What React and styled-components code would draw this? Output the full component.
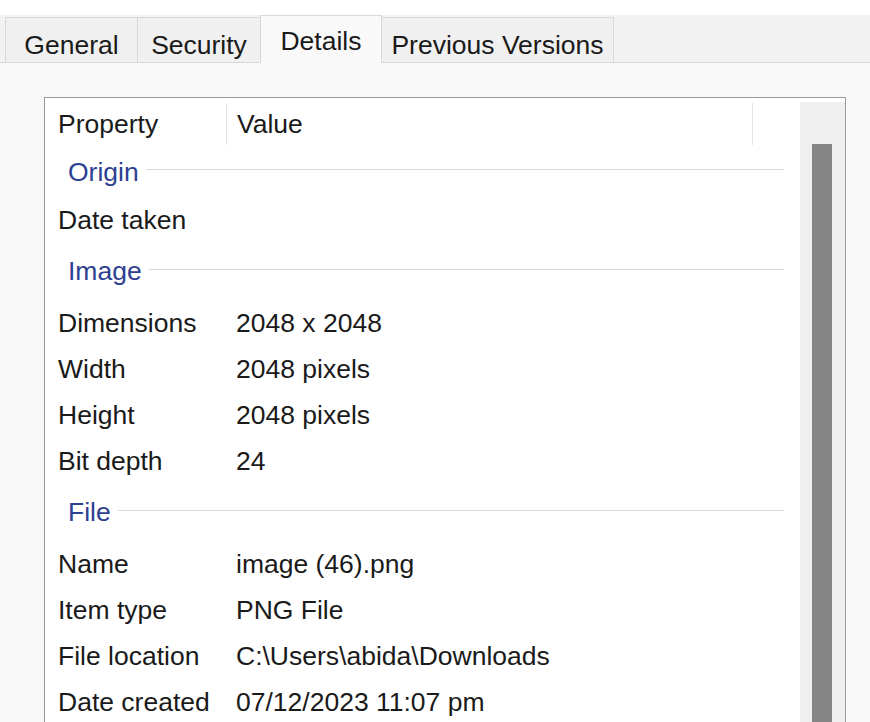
import React from 'react'
import styled, { createGlobalStyle } from 'styled-components'

const GlobalStyle = createGlobalStyle`
  html, body {
    margin: 0;
    padding: 0;
    overflow: hidden;
    background: #ffffff;
  }
  body {
    font-family: "Liberation Sans", Arial, sans-serif;
    color: #1a1a1a;
  }
`

const Window = styled.div`
  height: 722px;
  display: flex;
  flex-direction: column;
  overflow: hidden;
`

const TabStrip = styled.div`
  display: flex;
  align-items: flex-end;
  padding: 15px 0 0 5px;
  background: linear-gradient(#ffffff 15px, #f2f2f2 15px);
  border-bottom: 1px solid #d9d9d9;
  height: 47px;
`

const Tab = styled.div`
  position: relative;
  box-sizing: border-box;
  width: ${p => p.$width}px;
  height: ${p => (p.$active ? 48 : 45)}px;
  margin-left: -1px;
  margin-bottom: ${p => (p.$active ? '-1px' : '0')};
  padding-top: ${p => (p.$active ? '3px' : '10px')};
  display: flex;
  align-items: center;
  justify-content: center;
  font-size: 26.5px;
  color: #1a1a1a;
  background: ${p => (p.$active ? '#f9f9f9' : '#f0f0f0')};
  border: 1px solid #d9d9d9;
  border-bottom: none;
  z-index: ${p => (p.$active ? 1 : 0)};

  &:first-child {
    margin-left: 0;
  }
`

const Panel = styled.div`
  flex: 1;
  min-height: 0;
  background: #f8f8f8;
  padding: 34px 24px 0 44px;
  display: flex;
`

const ListBox = styled.div`
  flex: 1;
  display: flex;
  height: 700px;
  background: #ffffff;
  border: 1px solid #9a9a9a;
  border-bottom: none;
`

const ListContent = styled.div`
  flex: 1;
  display: flex;
  flex-direction: column;
`

const HeaderRow = styled.div`
  display: grid;
  grid-template-columns: 182px 526px 1fr;
  height: 49px;
`

const HeaderCell = styled.div`
  align-self: start;
  margin-top: 5px;
  height: 42px;
  display: flex;
  align-items: center;
  padding-left: ${p => p.$pad}px;
  font-size: 26.5px;
  color: #1a1a1a;
  border-right: ${p => (p.$divider ? '1px solid #e3e3e3' : 'none')};
`

const GroupHeader = styled.div`
  display: flex;
  align-items: center;
  height: ${p => (p.$first ? 50 : 57)}px;
  padding: 0 16px 0 23px;
  font-size: 26.5px;
  color: #2e4091;
`

const GroupLine = styled.div`
  flex: 1;
  height: 1px;
  margin: 0 0 5px 7px;
  background: #d3d9e3;
`

const Row = styled.div`
  display: grid;
  grid-template-columns: 178px 1fr;
  align-items: center;
  height: 46px;
  font-size: 26.5px;
  color: #1a1a1a;
`

const Cell = styled.div`
  padding-left: 13px;
  white-space: nowrap;
`

const ScrollTrack = styled.div`
  width: 45px;
  margin-top: 4px;
  padding: 42px 0 0 12px;
  box-sizing: border-box;
  background: #efefef;
`

const ScrollThumb = styled.div`
  width: 20px;
  height: 800px;
  background: #858585;
`

const tabs = [
  { label: 'General', width: 133 },
  { label: 'Security', width: 124 },
  { label: 'Details', width: 122, active: true },
  { label: 'Previous Versions', width: 233 },
]

const groups = [
  {
    title: 'Origin',
    rows: [['Date taken', '']],
  },
  {
    title: 'Image',
    rows: [
      ['Dimensions', '2048 x 2048'],
      ['Width', '2048 pixels'],
      ['Height', '2048 pixels'],
      ['Bit depth', '24'],
    ],
  },
  {
    title: 'File',
    rows: [
      ['Name', 'image (46).png'],
      ['Item type', 'PNG File'],
      ['File location', 'C:\\Users\\abida\\Downloads'],
      ['Date created', '07/12/2023 11:07 pm'],
    ],
  },
]

function App() {
  return (
    <Window>
      <GlobalStyle />
      <TabStrip>
        {tabs.map(t => (
          <Tab key={t.label} $width={t.width} $active={t.active}>
            {t.label}
          </Tab>
        ))}
      </TabStrip>
      <Panel>
        <ListBox>
          <ListContent>
            <HeaderRow>
              <HeaderCell $pad={13} $divider>Property</HeaderCell>
              <HeaderCell $pad={10} $divider>Value</HeaderCell>
              <HeaderCell />
            </HeaderRow>
            {groups.map((g, i) => (
              <React.Fragment key={g.title}>
                <GroupHeader $first={i === 0}>
                  {g.title}
                  <GroupLine />
                </GroupHeader>
                {g.rows.map(([name, value]) => (
                  <Row key={name}>
                    <Cell>{name}</Cell>
                    <Cell>{value}</Cell>
                  </Row>
                ))}
              </React.Fragment>
            ))}
          </ListContent>
          <ScrollTrack>
            <ScrollThumb />
          </ScrollTrack>
        </ListBox>
      </Panel>
    </Window>
  )
}

export default App
